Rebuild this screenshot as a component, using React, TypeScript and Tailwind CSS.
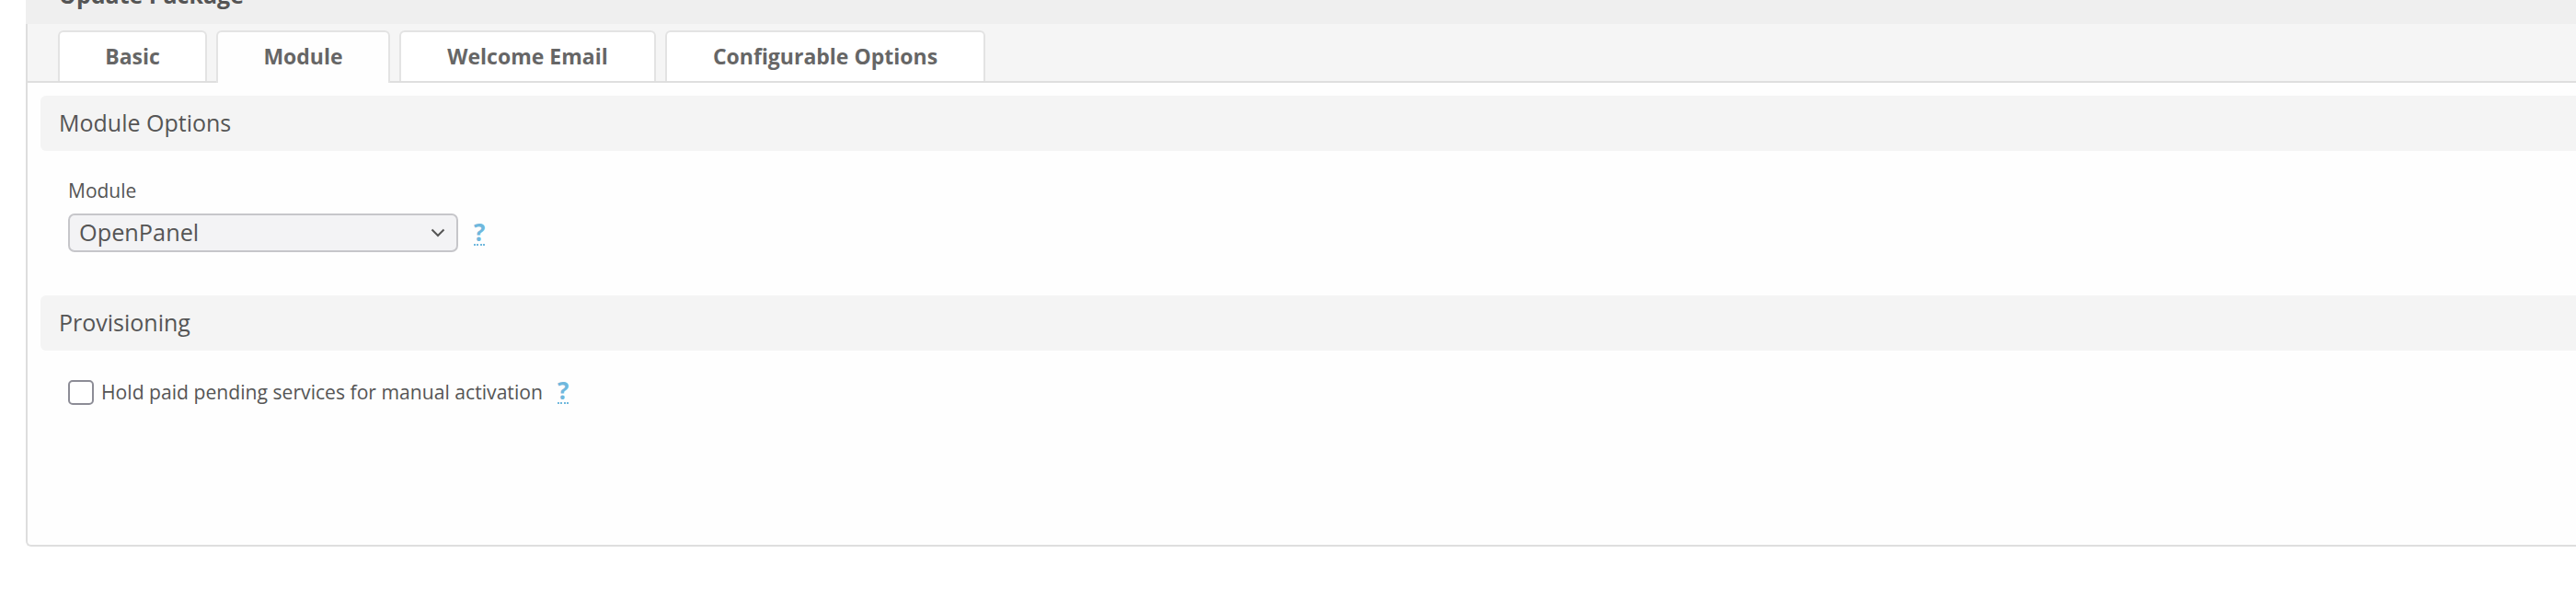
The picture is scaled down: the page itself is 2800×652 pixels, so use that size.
import { useState } from "react";

const tabs = [
  { name: "Basic", width: "w-[162px]" },
  { name: "Module", width: "w-[189px]" },
  { name: "Welcome Email", width: "w-[279px]" },
  { name: "Configurable Options", width: "w-[348px]" },
];

function HelpMark() {
  return (
    <span className="inline-block border-b-2 border-dotted border-[#6fb8dd] text-[26px] font-bold leading-[25px] text-[#6fb8dd] cursor-help">
      ?
    </span>
  );
}

function SectionBar({ title }: { title: string }) {
  return (
    <div className="flex h-[60px] items-center rounded-l-[6px] bg-[#f4f4f4] pl-[20px] text-[25px] text-[#555]">
      {title}
    </div>
  );
}

export default function App() {
  const [active, setActive] = useState("Module");
  const [hold, setHold] = useState(false);

  return (
    <div className="h-[652px] w-[2800px] overflow-hidden bg-white font-['Open_Sans',sans-serif]">
      <div className="ml-[28px] w-[2800px]">
        {/* panel title, mostly scrolled off the top */}
        <div className="-mt-[34px] h-[60px] bg-[#efefef] pl-[36px] pt-[11px] text-[25px] font-bold leading-[34px] text-[#555]">
          Update Package
        </div>

        <div className="h-[568px] rounded-bl-[6px] border-b-2 border-l-2 border-[#dedede] bg-[#fefefe]">
          {/* tabs */}
          <div className="flex h-[64px] items-end gap-[10px] border-b-2 border-[#dedede] bg-[#f5f5f5] pl-[33px]">
            {tabs.map((t) => (
              <button
                key={t.name}
                onClick={() => setActive(t.name)}
                className={
                  active === t.name
                    ? `${t.width} -mb-[2px] h-[57px] rounded-t-[6px] border-2 border-b-0 border-[#e3e3e3] bg-[#fefefe] pb-[2px] text-[23px] font-bold text-[#666]`
                    : `${t.width} h-[55px] rounded-t-[6px] border-2 border-b-0 border-[#e3e3e3] bg-white text-[23px] font-bold text-[#666]`
                }
              >
                {t.name}
              </button>
            ))}
          </div>

          <div className="pl-[14px] pt-[14px]">
            <SectionBar title="Module Options" />

            <div className="pl-[30px] pt-[28px]">
              <label className="block text-[21px] leading-[30px] text-[#555]">Module</label>
              <div className="mt-[10px] flex items-center gap-[17px]">
                <div className="flex h-[42px] w-[424px] items-center justify-between rounded-[7px] border-2 border-[#c6c6ca] bg-[#f3f3f5] pl-[10px] pr-[12px] text-[25.3px] text-[#555]">
                  <span>OpenPanel</span>
                  <svg width="16" height="10" viewBox="0 0 16 10" fill="none">
                    <path d="M1.5 1.5L8 8L14.5 1.5" stroke="#555" strokeWidth="2" />
                  </svg>
                </div>
                <HelpMark />
              </div>
            </div>

            <div className="mt-[47px]">
              <SectionBar title="Provisioning" />
            </div>

            <div className="flex items-center pl-[30px] pt-[30px]">
              <button
                onClick={() => setHold(!hold)}
                className="h-[27px] w-[28px] rounded-[5px] border-2 border-[#8c8c96] bg-white"
              />
              <span className="ml-[8px] text-[21.15px] leading-[30px] text-[#555]">
                Hold paid pending services for manual activation
              </span>
              <span className="ml-[16px]">
                <HelpMark />
              </span>
            </div>
          </div>
        </div>
      </div>
    </div>
  );
}
